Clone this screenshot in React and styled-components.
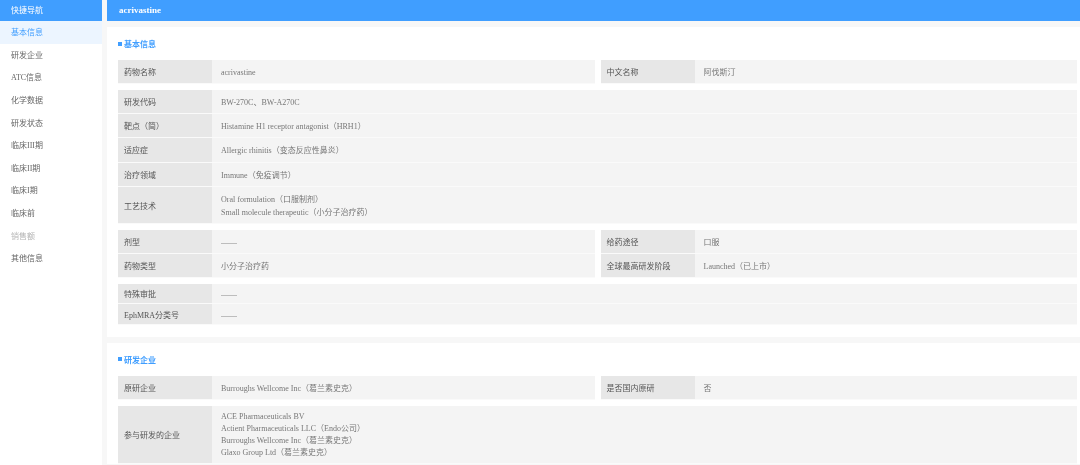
import React from 'react'
import styled, { createGlobalStyle } from 'styled-components';

const navItems = [
    { title: '基本信息', active: true },
    { title: '研发企业' },
    { title: 'ATC信息' },
    { title: '化学数据' },
    { title: '研发状态' },
    { title: '临床III期' },
    { title: '临床II期' },
    { title: '临床I期' },
    { title: '临床前' },
    { title: '销售额', disabled: true },
    { title: '其他信息' },
];

function Row({ label, children, height, tight }) {
    return (
        <RowStyled $height={height}>
            <Label>{label}</Label>
            <Value $tight={tight}>{children}</Value>
        </RowStyled>
    )
}

function App() {
    return (
        <Page>
            <GlobalStyle />
            <Sidebar>
                <SideHead>快捷导航</SideHead>
                {navItems.map((item) => (
                    <NavItem key={item.title} $active={item.active} $disabled={item.disabled}>{item.title}</NavItem>
                ))}
            </Sidebar>
            <Main>
                <MainHead>acrivastine</MainHead>
                <Card $pb={12}>
                    <SectionTitle>基本信息</SectionTitle>
                    <Group>
                        <Column>
                            <Row label="药物名称" height={24}>acrivastine</Row>
                        </Column>
                        <Column>
                            <Row label="中文名称" height={24}>阿伐斯汀</Row>
                        </Column>
                    </Group>
                    <Stack>
                        <Row label="研发代码" height={24.3}>BW-270C、BW-A270C</Row>
                        <Row label="靶点（简）" height={24.3}>Histamine H1 receptor antagonist（HRH1）</Row>
                        <Row label="适应症" height={24.6}>Allergic rhinitis（变态反应性鼻炎）</Row>
                        <Row label="治疗领域" height={24.5}>Immune（免疫调节）</Row>
                        <Row label="工艺技术" height={37.3}>
                            <p>Oral formulation（口服制剂）</p>
                            <p>Small molecule therapeutic（小分子治疗药）</p>
                        </Row>
                    </Stack>
                    <Group>
                        <Column>
                            <Row label="剂型" height={24}>——</Row>
                            <Row label="药物类型" height={24.5}>小分子治疗药</Row>
                        </Column>
                        <Column>
                            <Row label="给药途径" height={24}>口服</Row>
                            <Row label="全球最高研发阶段" height={24.5}>Launched（已上市）</Row>
                        </Column>
                    </Group>
                    <Stack>
                        <Row label="特殊审批" height={20.5}>——</Row>
                        <Row label="EphMRA分类号" height={20.5}>——</Row>
                    </Stack>
                </Card>
                <Card>
                    <SectionTitle>研发企业</SectionTitle>
                    <Group>
                        <Column>
                            <Row label="原研企业" height={24.5}>Burroughs Wellcome Inc（葛兰素史克）</Row>
                        </Column>
                        <Column>
                            <Row label="是否国内原研" height={24.5}>否</Row>
                        </Column>
                    </Group>
                    <Stack>
                        <Row label="参与研发的企业" height={58.5} tight>
                            <p>ACE Pharmaceuticals BV</p>
                            <p>Actient Pharmaceuticals LLC（Endo公司）</p>
                            <p>Burroughs Wellcome Inc（葛兰素史克）</p>
                            <p>Glaxo Group Ltd（葛兰素史克）</p>
                        </Row>
                    </Stack>
                </Card>
            </Main>
        </Page>
    )
}

const GlobalStyle = createGlobalStyle`
    html, body{
        margin: 0;
        padding: 0;
        background: #f7f7f7;
    }
    *{
        box-sizing: border-box;
    }
    p{
        margin: 0;
    }
`;

const Page = styled.div`
    display: flex;
    gap: 5px;
    width: 1080px;
    height: 465px;
    overflow: hidden;
    font-family: "Liberation Serif", "Noto Sans CJK SC", serif;
    font-size: 8px;
    filter: blur(0.4px);
`;

const Sidebar = styled.aside`
    flex: 0 0 102px;
    background: #fff;
`;

const SideHead = styled.div`
    height: 21px;
    padding-left: 11px;
    line-height: 21px;
    background: #409eff;
    color: #fff;
`;

const NavItem = styled.div`
    height: 22.65px;
    padding: 2px 0 0 11px;
    line-height: 20.65px;
    background: ${(p) => (p.$active ? '#ecf5ff' : 'transparent')};
    color: ${(p) => (p.$active ? '#409eff' : p.$disabled ? '#b5b5b5' : '#666')};
`;

const Main = styled.main`
    flex: 1;
    min-width: 0;
`;

const MainHead = styled.div`
    height: 21px;
    padding-left: 12px;
    line-height: 20px;
    font-size: 9px;
    font-weight: 700;
    background: #409eff;
    color: #fff;
`;

const Card = styled.section`
    margin-top: 6px;
    padding: 10px 3px ${(p) => p.$pb || 0}px 11px;
    background: #fff;
`;

const SectionTitle = styled.h3`
    display: flex;
    align-items: center;
    gap: 2px;
    height: 13px;
    margin: 0 0 10px;
    font-size: 8px;
    font-weight: 700;
    color: #409eff;
    &::before{
        content: '';
        flex: 0 0 4px;
        height: 4px;
        background: #409eff;
    }
`;

const Group = styled.div`
    display: flex;
    gap: 6px;
    margin-bottom: 5.5px;
`;

const Column = styled.div`
    display: flex;
    flex: 1;
    min-width: 0;
    flex-direction: column;
`;

const Stack = styled.div`
    display: flex;
    flex-direction: column;
    margin-bottom: 5.5px;
    &:last-child{
        margin-bottom: 0;
    }
`;

const RowStyled = styled.div`
    display: flex;
    min-height: ${(p) => p.$height}px;
    background: #f4f4f4;
    border-bottom: 0.5px solid #fafafa;
`;

const Label = styled.div`
    display: flex;
    align-items: center;
    flex: 0 0 94px;
    padding-left: 6px;
    background: #e7e7e7;
    color: #555;
`;

const Value = styled.div`
    display: flex;
    flex: 1;
    flex-direction: column;
    justify-content: center;
    padding: ${(p) => (p.$tight ? '0 0 0 9px' : '2px 0 0 9px')};
    line-height: ${(p) => (p.$tight ? '12px' : '13px')};
    color: #777;
`;

export default App;
